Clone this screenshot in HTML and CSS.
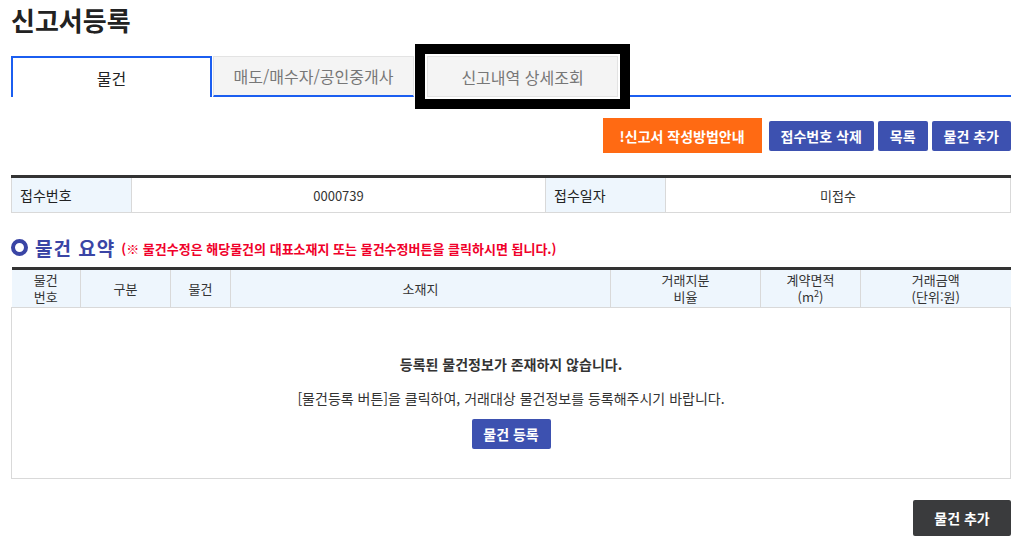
FILE: index.html
```html
<!DOCTYPE html>
<html lang="ko">
<head>
    <meta charset="UTF-8">
    <title>신고서등록</title>
    <link rel="stylesheet" href="styles.css">
</head>
<body>
    <h1 class="page-title">신고서등록</h1>

    <div class="tabs">
        <div class="tab active">물건</div>
        <div class="tab">매도/매수자/공인중개사</div>
        <div class="tab marked">신고내역 상세조회</div>
        <div class="tab-rest"></div>
    </div>

    <div class="btn-row">
        <button class="btn btn-orange">!신고서 작성방법안내</button>
        <button class="btn btn-blue">접수번호 삭제</button>
        <button class="btn btn-blue">목록</button>
        <button class="btn btn-blue">물건 추가</button>
    </div>

    <table class="info-table">
        <colgroup>
            <col style="width:120px">
            <col style="width:414px">
            <col style="width:120px">
            <col>
        </colgroup>
        <tr>
            <th>접수번호</th>
            <td>0000739</td>
            <th>접수일자</th>
            <td>미접수</td>
        </tr>
    </table>

    <div class="section-head">
        <span class="ring"></span>
        <h2>물건 요약</h2>
        <span class="note">(※ 물건수정은 해당물건의 대표소재지 또는 물건수정버튼을 클릭하시면 됩니다.)</span>
    </div>

    <table class="list-table">
        <colgroup>
            <col style="width:69px">
            <col style="width:90px">
            <col style="width:60px">
            <col style="width:380px">
            <col style="width:150px">
            <col style="width:100px">
            <col>
        </colgroup>
        <thead>
            <tr>
                <th>물건<br>번호</th>
                <th>구분</th>
                <th>물건</th>
                <th>소재지</th>
                <th>거래지분<br>비율</th>
                <th>계약면적<br>(m<span class="sq">2</span>)</th>
                <th>거래금액<br>(단위:원)</th>
            </tr>
        </thead>
        <tbody>
            <tr>
                <td colspan="7" class="empty">
                    <p class="empty-title">등록된 물건정보가 존재하지 않습니다.</p>
                    <p class="empty-desc">[물건등록 버튼]을 클릭하여, 거래대상 물건정보를 등록해주시기 바랍니다.</p>
                    <button class="btn btn-blue btn-reg">물건 등록</button>
                </td>
            </tr>
        </tbody>
    </table>

    <div class="bottom-row">
        <button class="btn btn-dark">물건 추가</button>
    </div>
</body>
</html>
```

FILE: styles.css
```css
* {
    margin: 0;
    padding: 0;
    box-sizing: border-box;
}
body {
    font-family: "Noto Sans CJK KR", "Noto Sans", sans-serif;
    font-size: 13px;
    color: #333;
    background: #fff;
    padding: 0 7px 0 11px;
}
.page-title {
    font-size: 26px;
    font-weight: bold;
    color: #222;
    line-height: 30px;
    padding-top: 5px;
}
.tabs {
    display: flex;
    margin-top: 21px;
    height: 41px;
}
.tab {
    width: 201px;
    border: 1px solid #e3e3e3;
    border-bottom: 2px solid #1b5ef0;
    background: #f4f4f4;
    color: #777;
    font-size: 16px;
    display: flex;
    align-items: center;
    justify-content: center;
}
.tab.active {
    background: #fff;
    color: #222;
    border: 2px solid #1b5ef0;
    border-bottom: none;
}
.tab + .tab {
    margin-left: 1px;
}
.tab.marked {
    width: 191px;
    margin-left: 13px;
    border-bottom: 1px solid #e3e3e3;
    outline: 10px solid #000;
    outline-offset: 2px;
    z-index: 1;
}
.tab-rest {
    flex: 1;
    border-bottom: 2px solid #1b5ef0;
    margin-left: 12px;
}
.btn-row {
    display: flex;
    justify-content: flex-end;
    align-items: center;
    gap: 4px;
    margin-top: 21px;
}
.btn {
    font-family: inherit;
    border: none;
    border-radius: 2px;
    color: #fff;
    font-weight: bold;
    font-size: 14px;
    white-space: nowrap;
    cursor: pointer;
    padding: 0 12px;
    height: 30px;
}
.btn-blue {
    background: #3d51b0;
}
.btn-orange {
    background: #ff6a13;
    border-radius: 0;
    height: 35px;
    width: 159px;
    margin-right: 3px;
}
.btn-dark {
    background: #3a3b3d;
    height: 36px;
    width: 98px;
}
.info-table {
    width: 1000px;
    border-collapse: collapse;
    margin-top: 22px;
    border-top: 3px solid #333;
    table-layout: fixed;
}
.info-table th,
.info-table td {
    border: 1px solid #d9d9d9;
    height: 36px;
    font-weight: normal;
    font-size: 14px;
}
.info-table th {
    background: #eef6fd;
    text-align: left;
    padding-left: 8px;
    color: #222;
}
.info-table td {
    text-align: center;
    font-size: 13px;
}
.section-head {
    display: flex;
    align-items: center;
    margin-top: 21px;
    height: 26px;
}
.ring {
    width: 17px;
    height: 17px;
    border: 4px solid #3a45a5;
    border-radius: 50%;
    margin-right: 7px;
}
.section-head h2 {
    font-size: 19px;
    color: #3a45a5;
    font-weight: bold;
    letter-spacing: 1px;
    margin-right: 6px;
}
.note {
    color: #f0002a;
    font-size: 13px;
    font-weight: bold;
    padding-top: 3px;
}
.list-table {
    width: 1000px;
    border-collapse: collapse;
    margin-top: 7px;
    border-top: 3px solid #333;
    table-layout: fixed;
}
.list-table th {
    background: #eef6fd;
    border: 1px solid #d9d9d9;
    border-top: none;
    font-weight: normal;
    font-size: 13px;
    line-height: 17px;
    height: 38px;
    padding: 1px 0 2px;
    color: #333;
}
.list-table th:first-child {
    border-left: none;
}
.list-table th:last-child {
    border-right: none;
}
.sq {
    font-size: 9px;
    vertical-align: 5px;
    line-height: 9px;
}
.list-table td {
    border: 1px solid #d9d9d9;
}
.empty {
    height: 171px;
    text-align: center;
    vertical-align: top;
    padding-top: 46px;
}
.empty-title {
    font-weight: bold;
    font-size: 14px;
    color: #333;
}
.empty-desc {
    margin-top: 14px;
    font-size: 14px;
    color: #333;
}
.btn-reg {
    margin-top: 11px;
    width: 79px;
    padding: 0;
}
.bottom-row {
    display: flex;
    justify-content: flex-end;
    margin-top: 21px;
}
```
